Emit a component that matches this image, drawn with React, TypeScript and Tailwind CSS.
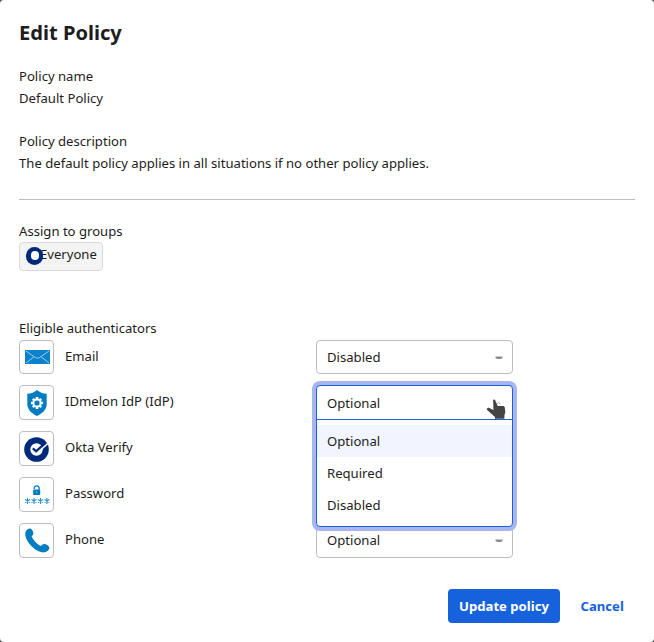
import type { ReactNode } from "react";

function EmailIcon() {
  return (
    <svg width="25" height="14" viewBox="0 0 25 14" className="-mt-0.5">
      <rect width="25" height="14" fill="#0b82cb" />
      <path d="M1 1l9.5 6.6q2 1.3 4 0L24 1M1 13l8-6.2M24 13l-8-6.2" fill="none" stroke="#a9d2ec" strokeWidth="0.9" />
    </svg>
  );
}

function ShieldIcon() {
  return (
    <svg width="20" height="26" viewBox="0 0 20 26">
      <path d="M10 0C7.5 2.4 4 3.6 0.3 3.8V14c0 5.5 4.2 9.5 9.7 12 5.500-2.500 9.700-6.500 9.700-12V3.800C16 3.600 12.500 2.400 10 0z" fill="#007dc1" />
      <path d="M10 7v12M4 13h12M5.800 8.800l8.400 8.400M14.200 8.800l-8.400 8.400" stroke="#fff" strokeWidth="2.600" />
      <circle cx="10" cy="13" r="4.600" fill="#fff" />
      <circle cx="10" cy="13" r="2.600" fill="#007dc1" />
    </svg>
  );
}

function OktaIcon() {
  return (
    <svg width="25" height="25" viewBox="0 0 25 25" className="-ml-px">
      <circle cx="12.500" cy="12.500" r="12.300" fill="#00297a" />
      <circle cx="12.500" cy="12.500" r="6.200" fill="#fff" />
      <path d="M13 16.200L23.800 6.300" fill="none" stroke="#fff" strokeWidth="1.700" />
      <path d="M8.800 11.300l3.300 3L21.500 5.800" fill="none" stroke="#00297a" strokeWidth="2.300" />
    </svg>
  );
}

function PasswordIcon() {
  return (
    <svg width="26" height="20" viewBox="0 0 26 20">
      <path d="M10.300 4V3.200a2.400 2.400 0 0 1 4.800 0V5" fill="none" stroke="#007dc1" strokeWidth="1.300" />
      <rect x="9.200" y="4.500" width="7" height="5.500" rx="0.500" fill="#007dc1" />
      <circle cx="12.700" cy="7" r="0.500" fill="#fff" />
      <path d="M3.500 13v6M1 14.500l5 3M6 14.500l-5 3M10 13v6M7.500 14.500l5 3M12.500 14.500l-5 3M16.500 13v6M14 14.500l5 3M19 14.500l-5 3M23 13v6M20.500 14.500l5 3M25.500 14.500l-5 3" stroke="#2a91cc" strokeWidth="1.100" />
    </svg>
  );
}

function PhoneIcon() {
  return (
    <svg width="25" height="25" viewBox="0 0 25 25" className="-mt-px">
      <path d="M1.300 2.500C3.500-.2 5.800-.2 7.300 2.200c1.600 2.600 1.400 4.400-.7 6 1.200 3.500 5.300 7.800 9.300 9.800 1.800-2.500 3.600-2.700 6.300-1 2.700 1.700 2.900 3.800.300 6-2.300 1.900-5.600 1.900-9.500 0C6.900 20 1.500 13.200.4 7.800 0 5.800.2 3.900 1.300 2.500z" fill="#007dc1" />
    </svg>
  );
}

function SelectMark() {
  return (
    <svg width="8" height="4" viewBox="0 0 8 4" className="mt-0.5">
      <path d="M.5.5h7v1.500L6 3H2L.5 2z" fill="#8c8c96" />
    </svg>
  );
}

function HandCursor() {
  return (
    <svg width="20" height="21" viewBox="0 0 20 21">
      <path d="M7.100 1.800C6.800.6 8.600-.1 9.200 1.200l2.500 5.900 5.300-.2c1 0 1.600.6 1.800 1.600l.5 4.500c.1 1.200-.7 2-.9 3.200v3.500H9v-1.800L1.100 11c-1-1.200.8-2.700 2.300-2l4.100 2z" fill="#444" />
      <path d="M11 4.500l2-1 1 1.500" fill="none" stroke="#999" strokeWidth="0.700" />
    </svg>
  );
}

function Select({ value, height }: { value: string; height: string }) {
  return (
    <div className={`flex w-[197px] items-center justify-between rounded-[4px] border border-[#bcbcc2] bg-white pr-[9px] pl-[10px] ${height}`}>
      <span>{value}</span>
      <SelectMark />
    </div>
  );
}

function OpenSelect() {
  return (
    <div className="relative h-[35px] w-[197px]">
      <div className="absolute inset-x-0 top-0 z-10 h-[142px] overflow-hidden rounded-[4px] border border-[#1662dd] bg-white shadow-[0_0_0_4px_#a9b5ee]">
        <div className="flex h-[34px] items-center border-b border-[#1662dd] pt-px pl-[10px]">Optional</div>
        <ul className="pt-[5px]">
          <li className="flex h-8 items-center bg-[#f2f4ff] pl-[10px]">Optional</li>
          <li className="flex h-8 items-center pl-[10px]">Required</li>
          <li className="flex h-8 items-center pl-[10px]">Disabled</li>
        </ul>
      </div>
      <div className="absolute top-[14px] left-[170px] z-20">
        <HandCursor />
      </div>
    </div>
  );
}

const rows: { name: string; icon: ReactNode; control?: ReactNode; height: string; box: string }[] = [
  { name: "Email", icon: <EmailIcon />, control: <Select value="Disabled" height="h-[34px]" />, height: "h-[45px]", box: "h-[34px]" },
  { name: "IDmelon IdP (IdP)", icon: <ShieldIcon />, control: <OpenSelect />, height: "h-[46px]", box: "h-[35px]" },
  { name: "Okta Verify", icon: <OktaIcon />, height: "h-[46px]", box: "h-[35px]" },
  { name: "Password", icon: <PasswordIcon />, height: "h-[46px]", box: "h-[35px]" },
  { name: "Phone", icon: <PhoneIcon />, control: <Select value="Optional" height="h-[35px] pb-0.5" />, height: "h-[46px]", box: "h-[35px]" },
];

export default function App() {
  return (
    <div className="h-[642px] w-[654px] bg-[#555]">
      <main className="flex h-full flex-col rounded-[4px] bg-white px-[19px] font-['Noto_Sans',sans-serif] text-[13.12px] leading-[22px] text-[#1d1d21]">
        <h1 className="mt-[18px] text-[20.1px] leading-[30px] font-bold">Edit Policy</h1>
        <section className="mt-[17px]">
          <p>Policy name</p>
          <p>Default Policy</p>
        </section>
        <section className="mt-[21px]">
          <p>Policy description</p>
          <p>The default policy applies in all situations if no other policy applies.</p>
        </section>
        <hr className="mt-[25px] border-[#bcbcc2]" />
        <section className="mt-5">
          <p>Assign to groups</p>
          <div className="flex h-[29px] w-[84px] items-center rounded-[4px] border border-[#d8d8dc] bg-[#f4f4f4] pl-1.5">
            <span className="z-10 mb-0.5 flex h-[18px] w-[17px] shrink-0 items-center justify-center rounded-full bg-[#00297a]">
              <span className="h-[9px] w-[8px] rounded-full bg-white" />
            </span>
            <span className="-ml-[3px] pb-[5px]">Everyone</span>
          </div>
        </section>
        <section className="mt-[46px]">
          <p>Eligible authenticators</p>
          <ul className="mt-px">
            {rows.map((row) => (
              <li key={row.name} className={`flex items-start ${row.height}`}>
                <div className={`flex w-[35px] shrink-0 items-center justify-center rounded-[4px] border border-[#bcbcc2] bg-white pt-px pl-px ${row.box}`}>
                  {row.icon}
                </div>
                <span className="mt-[5px] ml-[11px] w-[251px]">{row.name}</span>
                {row.control}
              </li>
            ))}
          </ul>
        </section>
        <footer className="mt-5 flex items-center font-bold">
          <button className="ml-[429px] h-[34px] w-[112px] rounded-[4px] bg-[#1662dd] text-white">Update policy</button>
          <button className="ml-[20.500px] text-[#1662dd]">Cancel</button>
        </footer>
      </main>
    </div>
  );
}
